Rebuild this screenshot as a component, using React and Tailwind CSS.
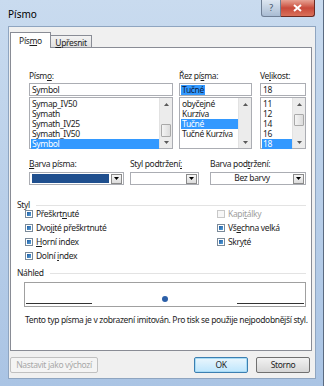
const FONTS = ['Symap_IV50', 'Symath', 'Symath_IV25', 'Symath_IV50', 'Symbol'];
const STYLES = ['obyčejné', 'Kurzíva', 'Tučné', 'Tučné Kurzíva'];
const SIZES = ['11', '12', '14', '16', '18'];

function Arrow({ up }) {
  return (
    <svg width="5" height="3" viewBox="0 0 5 3">
      <path d={up ? 'M0 3 L2.5 0 L5 3 Z' : 'M0 0 L5 0 L2.5 3 Z'} fill="#5a5a5a" />
    </svg>
  );
}

function ScrollBar({ thumbTop, thumbH }) {
  return (
    <div className="w-[13px] h-full bg-[#ececec] border-l border-[#e2e2e2] flex flex-col">
      <div className="h-[12px] flex items-center justify-center"><Arrow up /></div>
      <div className="flex-1 relative">
        {thumbH > 0 && (
          <div className="absolute left-[1px] right-[1px] rounded-[1px] border border-[#a9a9a9] bg-gradient-to-r from-[#f4f4f4] to-[#dcdcdc]" style={{ top: thumbTop, height: thumbH }} />
        )}
      </div>
      <div className="h-[12px] flex items-center justify-center"><Arrow /></div>
    </div>
  );
}

function ListBox({ items, selected, width, thumbTop, thumbH }) {
  return (
    <div className={`${width} h-[52px] mt-[1px] bg-white border border-[#abadb3] flex`}>
      <div className="flex-1 flex flex-col pt-[1px] pl-[1px]">
        {items.map((it) => (
          <div key={it} className={`h-[10px] leading-[10px] pl-[1px] whitespace-nowrap ${it === selected ? 'bg-[#3399ff] text-white' : ''}`}>{it}</div>
        ))}
      </div>
      <ScrollBar thumbTop={thumbTop} thumbH={thumbH} />
    </div>
  );
}

function DropButton() {
  return (
    <div className="w-[11px] h-[10px] border border-[#8a8a8a] bg-gradient-to-b from-[#f6f6f6] to-[#dcdcdc] flex items-center justify-center">
      <svg width="5" height="3" viewBox="0 0 5 3"><path d="M0 0 L5 0 L2.5 3 Z" fill="#000" /></svg>
    </div>
  );
}

function Check({ label, disabled }) {
  return (
    <div className="h-[14px] flex items-center">
      {disabled ? (
        <div className="w-[8px] h-[8px] border border-[#c8c8c8] bg-[#f7f7f7]" />
      ) : (
        <div className="w-[8px] h-[8px] border border-[#7a8a99] bg-white p-[1px]">
          <div className="w-full h-full bg-gradient-to-br from-[#1d5aa0] to-[#5aa4dc]" />
        </div>
      )}
      <span className={`ml-[3px] ${disabled ? 'text-[#a0a0a0]' : ''}`}>{label}</span>
    </div>
  );
}

function U({ children }) {
  return <span className="underline underline-offset-1">{children}</span>;
}

export default function App() {
  return (
    <div className="w-[324px] h-[386px] overflow-hidden bg-gradient-to-b from-[#c9dbef] via-[#b9cfe9] to-[#aac4e4] font-['Segoe_UI','Noto_Sans',sans-serif] text-[8.5px] tracking-[-0.35px] text-[#1e1e1e] border-r border-[#5a6a80]">
      {/* title bar */}
      <div className="h-[26px] flex items-start justify-between">
        <div className="pl-[8px] pt-[7px] text-[10px] tracking-normal text-black">Písmo</div>
        <div className="flex mr-[8px]">
          <div className="w-[20px] h-[17px] rounded-bl-[3px] border border-t-0 border-[#6f7f95] bg-gradient-to-b from-[#dde6f1] to-[#a9bcd3] flex items-center justify-center text-[9px] text-[#44546a]">?</div>
          <div className="w-[34px] h-[17px] rounded-br-[3px] border border-t-0 border-l-0 border-[#6b2a22] bg-gradient-to-b from-[#e6a294] via-[#c8493a] to-[#d9705a] flex items-center justify-center">
            <svg width="9" height="8" viewBox="0 0 9 8"><path d="M1 1 L8 7 M8 1 L1 7" stroke="#fff" strokeWidth="2" /></svg>
          </div>
        </div>
      </div>

      {/* client */}
      <div className="ml-[8px] w-[308px] h-[353px] bg-[#f0f0f0] border border-[#8fa5c0] pl-[1px] pt-[5px]">
        {/* tabs */}
        <div className="flex items-end h-[15px]">
          <div className="relative z-10 w-[41px] -mb-[1px] h-[16px] bg-white border border-b-0 border-[#898c95] flex justify-center pt-[2px]">Pís<U>m</U>o</div>
          <div className="w-[41px] h-[12px] bg-gradient-to-b from-[#f3f3f3] to-[#e1e1e1] border border-b-0 border-l-0 border-[#898c95] flex justify-center pt-[1px]"><U>U</U>přesnit</div>
        </div>

        {/* panel */}
        <div className="w-[302px] h-[304px] bg-white border border-[#898c95] pt-[22px]">
          <div className="flex pl-[18px]">
            <div className="w-[144px]">
              <div className="h-[11px] leading-[11px]">Písm<U>o</U>:</div>
              <div className="h-[13px] mt-[2px] border border-[#abadb3] pl-[2px] leading-[11px]">Symbol</div>
              <ListBox items={FONTS} selected="Symbol" width="w-[144px]" thumbTop={14} thumbH={13} />
            </div>
            <div className="w-[73px] ml-[6px]">
              <div className="h-[11px] leading-[11px]">Řez pí<U>s</U>ma:</div>
              <div className="h-[13px] mt-[2px] border border-[#abadb3] pl-[1px] flex items-center"><span className="bg-[#3399ff] text-[#0c2040] leading-[10px] px-[1px]">Tučné</span></div>
              <ListBox items={STYLES} selected="Tučné" width="w-[73px]" thumbTop={0} thumbH={0} />
            </div>
            <div className="w-[46px] ml-[8px]">
              <div className="h-[11px] leading-[11px]">Ve<U>l</U>ikost:</div>
              <div className="h-[13px] mt-[2px] border border-[#abadb3] pl-[2px] leading-[11px]">18</div>
              <ListBox items={SIZES} selected="18" width="w-[46px]" thumbTop={4} thumbH={12} />
            </div>
          </div>

          {/* colors */}
          <div className="flex pl-[18px] mt-[9px]">
            <div className="w-[95px]">
              <div className="h-[11px] leading-[11px]"><U>B</U>arva písma:</div>
              <div className="h-[13px] mt-[3px] border border-[#abadb3] flex items-center pl-[2px] pr-[1px] gap-[2px]">
                <div className="flex-1 h-[9px] bg-[#1f4f8e]" />
                <DropButton />
              </div>
            </div>
            <div className="w-[69px] ml-[6px]">
              <div className="h-[11px] leading-[11px]">Styl podtržení<U>:</U></div>
              <div className="h-[13px] mt-[3px] border border-[#abadb3] flex items-center justify-end pr-[1px]"><DropButton /></div>
            </div>
            <div className="w-[96px] ml-[11px]">
              <div className="h-[11px] leading-[11px]">Barva pod<U>t</U>ržení:</div>
              <div className="h-[13px] mt-[3px] border border-[#abadb3] flex items-center pr-[1px]">
                <div className="flex-1 text-center">Bez barvy</div>
                <DropButton />
              </div>
            </div>
          </div>

          {/* styl */}
          <div className="flex items-center pl-[6px] pr-[5px] mt-[15px] h-[10px]">
            <span>Styl</span>
            <div className="flex-1 ml-[6px] h-px bg-[#e3e3e3]" />
          </div>
          <div className="flex pl-[14px] -mt-[3px]">
            <div className="w-[192px]">
              <Check label={<>Přeškrt<U>n</U>uté</>} />
              <Check label={<>Dvoj<U>i</U>té přeškrtnuté</>} />
              <Check label={<><U>H</U>orní index</>} />
              <Check label={<>Dolní <U>i</U>ndex</>} />
            </div>
            <div>
              <Check disabled label={<>Kapi<U>t</U>álky</>} />
              <Check label={<>Vš<U>e</U>chna velká</>} />
              <Check label={<>Skr<U>y</U>té</>} />
            </div>
          </div>

          {/* nahled */}
          <div className="flex items-center pl-[6px] pr-[5px] mt-[5px] h-[10px]">
            <span>Náhled</span>
            <div className="flex-1 ml-[6px] h-px bg-[#e3e3e3]" />
          </div>
          <div className="ml-[13px] mt-[4px] w-[282px] h-[25px] border border-[#a0a0a0] flex items-end pb-[2px] px-[1px]">
            <div className="w-[66px] h-px bg-[#333]" />
            <div className="flex-1 flex justify-center self-stretch items-end pb-[2px]">
              <div className="w-[6px] h-[6px] rounded-full bg-[#2b5fa8]" />
            </div>
            <div className="w-[67px] h-px bg-[#333]" />
          </div>
          <div className="ml-[14px] mt-[7px] whitespace-nowrap">Tento typ písma je v zobrazení imitován. Pro tisk se použije nejpodobnější styl.</div>
        </div>

        {/* buttons */}
        <div className="flex mt-[6px] pr-[5px]">
          <div className="w-[88px] h-[16px] rounded-[2px] border border-[#c0c0c0] bg-[#f4f4f4] text-[#a8a8a8] flex items-center justify-center">Nastavit jako výchozí</div>
          <div className="flex-1" />
          <div className="w-[54px] h-[16px] rounded-[2px] border border-[#3c7fb1] bg-gradient-to-b from-[#eaf6fd] to-[#bee6fd] flex items-center justify-center shadow-[inset_0_0_0_1px_#a8dcf6]">OK</div>
          <div className="w-[54px] h-[16px] ml-[8px] rounded-[2px] border border-[#707070] bg-gradient-to-b from-[#f2f2f2] to-[#d6d6d6] flex items-center justify-center">Storno</div>
        </div>
      </div>
    </div>
  );
}
